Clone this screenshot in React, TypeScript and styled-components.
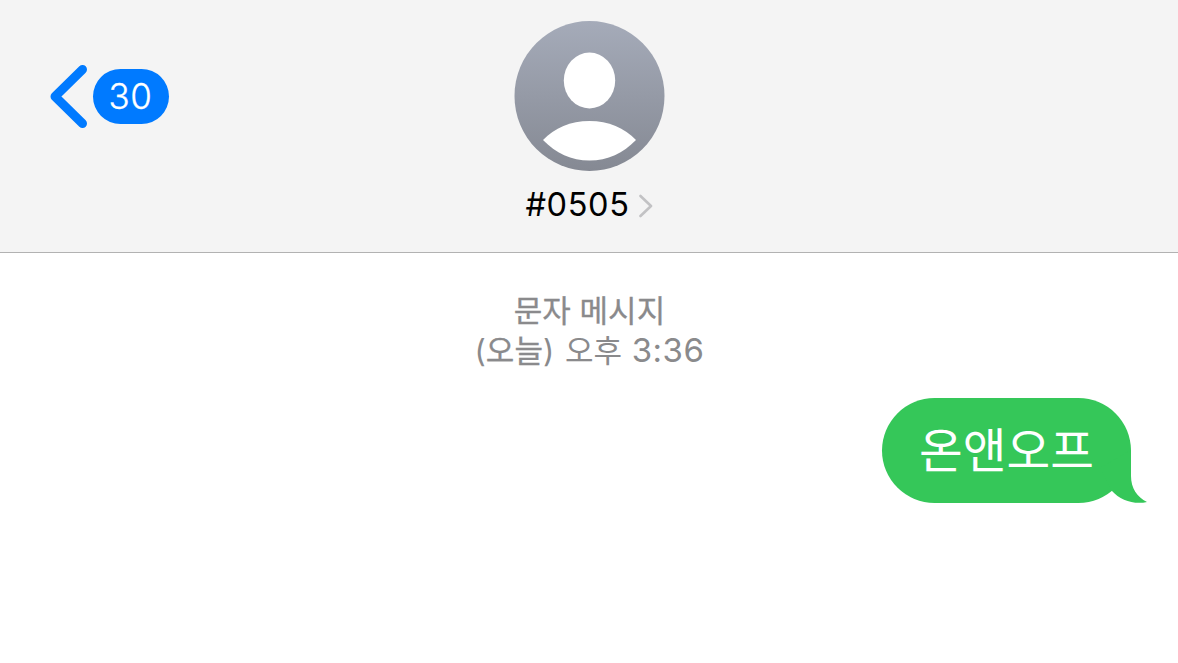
import React from 'react';
import { styled, createGlobalStyle } from 'styled-components';

const colors = {
  blue: '#007aff',
  green: '#35c759',
  bar: '#f4f4f4',
  separator: '#b2b2b2',
  secondary: '#8a8a8c',
  chevron: '#c2c2c4'
};

const GlobalStyle = createGlobalStyle`
  body {
    margin: 0px;
    background: #ffffff;
    font-family: Inter, 'Noto Sans CJK KR', sans-serif;
    -webkit-font-smoothing: antialiased;
  }
`;

const Screen = styled.div`
  display: flex;
  flex-direction: column;
  width: 100%;
  height: 663px;
  overflow: hidden;
`;

const Header = styled.header`
  display: grid;
  grid-template-columns: 1fr auto 1fr;
  align-items: start;
  box-sizing: border-box;
  height: 253px;
  padding: 21px 49px 0px 50px;
  background: ${colors.bar};
  border-bottom: 1px solid ${colors.separator};
`;

const BackButton = styled.button`
  display: inline-flex;
  align-items: center;
  justify-self: start;
  gap: 5px;
  margin-top: 43px;
  padding: 0px;
  border: none;
  background: none;
  font-family: inherit;
`;

const UnreadBadge = styled.span`
  display: inline-flex;
  align-items: center;
  justify-content: center;
  box-sizing: border-box;
  width: 76px;
  height: 55px;
  padding-right: 1px;
  border-radius: 27.5px;
  background: ${colors.blue};
  color: #ffffff;
  font-size: 35px;
  font-weight: 300;
  line-height: 55px;
  letter-spacing: 0.5px;
  -webkit-text-stroke: 0.3px #ffffff;
`;

const Contact = styled.div`
  display: flex;
  flex-direction: column;
  align-items: center;
`;

const ContactName = styled.div`
  display: flex;
  align-items: center;
  gap: 9px;
  margin-top: 14px;
  padding-right: 1px;
  color: #000000;
  font-size: 32.5px;
  line-height: 40px;
  letter-spacing: 0.6px;
`;

const Conversation = styled.main`
  display: flex;
  flex-direction: column;
  padding: 38px 47px 0px 0px;
`;

const Timestamp = styled.div`
  display: flex;
  flex-direction: column;
  align-items: center;
  margin-right: -48px;
  color: ${colors.secondary};
  font-size: 31px;
  line-height: 40px;
  white-space: pre;
`;

const TimestampLine = styled.span`
  height: 40px;
`;

const Strong = styled.span`
  -webkit-text-stroke: 0.3px ${colors.secondary};
`;

const Period = styled.span`
  margin: 0px 1px 0px 2px;
`;

const Time = styled.span`
  font-size: 33px;
  line-height: 1;
  letter-spacing: 0.5px;
`;

const Bubble = styled.div`
  position: relative;
  align-self: flex-end;
  box-sizing: border-box;
  width: 249px;
  height: 105px;
  margin-top: 27px;
  border-radius: 52.5px;
  background: ${colors.green};
  color: #ffffff;
  font-family: 'Noto Sans CJK KR', sans-serif;
  font-size: 47.5px;
  line-height: 99px;
  text-align: center;
`;

const Tail = styled.svg`
  position: absolute;
  right: -16px;
  bottom: 0px;
`;

const BackIcon = () => (
  <svg width="38" height="65" viewBox="0 0 38 65" fill="none">
    <path d="M32.5 5.5L5 32.5L32.5 59.5" stroke={colors.blue} strokeWidth="9" strokeLinecap="round" strokeLinejoin="round" />
  </svg>
);

const ChevronIcon = () => (
  <svg width="14" height="26" viewBox="0 0 14 26" fill="none">
    <path d="M1.5 4L12 14L1.5 24" stroke={colors.chevron} strokeWidth="2.6" strokeLinecap="round" strokeLinejoin="round" />
  </svg>
);

const Avatar = () => (
  <svg width="151" height="150" viewBox="-0.5 0 151 150">
    <defs>
      <linearGradient id="avatar" x1="0" y1="0" x2="0" y2="1">
        <stop offset="0" stopColor="#a5abb9" />
        <stop offset="1" stopColor="#858993" />
      </linearGradient>
    </defs>
    <circle cx="75" cy="75" r="75" fill="url(#avatar)" />
    <ellipse cx="75" cy="59.5" rx="25.7" ry="28" fill="#ffffff" />
    <path d="M28.5 119C40 107 56 100 75 100C94 100 110 107 121.5 119C109 132 93 139.5 75 139.5C57 139.5 41 132 28.5 119Z" fill="#ffffff" />
  </svg>
);

export default function App() {
  return (
    <>
      <GlobalStyle />
      <Screen>
        <Header>
          <BackButton>
            <BackIcon />
            <UnreadBadge>30</UnreadBadge>
          </BackButton>
          <Contact>
            <Avatar />
            <ContactName>
              <span>#0505</span>
              <ChevronIcon />
            </ContactName>
          </Contact>
        </Header>
        <Conversation>
          <Timestamp>
            <TimestampLine>
              <Strong>문자 메시지</Strong>
            </TimestampLine>
            <TimestampLine>
              (<Strong>오늘</Strong>) <Period>오후</Period> <Time>3:36</Time>
            </TimestampLine>
          </Timestamp>
          <Bubble>
            온앤오프
            <Tail width="47" height="55" viewBox="0 0 47 55">
              <path d="M0 20L31 2V28C31 40 37 49 47 54C34 57 20 52 12 43Z" fill={colors.green} />
            </Tail>
          </Bubble>
        </Conversation>
      </Screen>
    </>
  );
}
